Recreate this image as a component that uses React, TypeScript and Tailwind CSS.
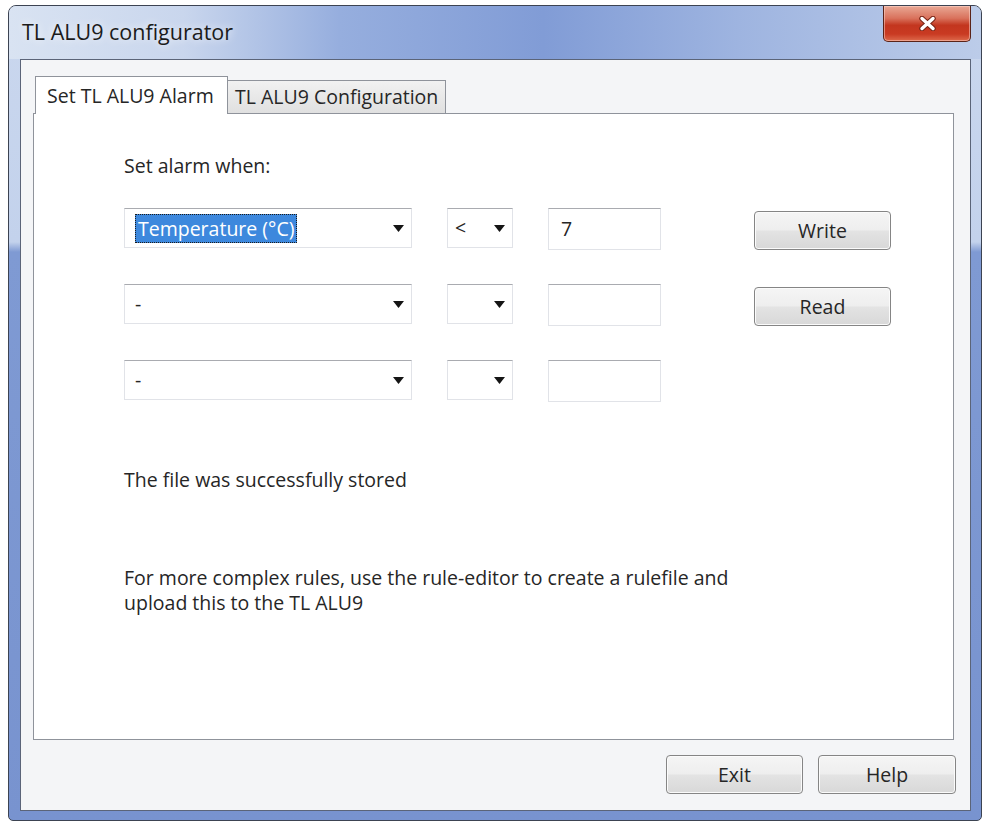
import type { ReactNode } from 'react'

function Arrow() {
  return (
    <svg width="11" height="7" viewBox="0 0 11 7" className="shrink-0">
      <path d="M0 0h11L5.5 7z" fill="#151515" />
    </svg>
  )
}

function Combo({ w, children }: { w: string; children?: ReactNode }) {
  return (
    <div
      className={`${w} h-[40px] flex items-center justify-between pl-[10px] pr-[7px] bg-white border border-[#e1e3e8] border-t-[#a9abb0]`}
    >
      <div className="flex items-center">{children}</div>
      <Arrow />
    </div>
  )
}

function Field({ value }: { value?: string }) {
  return (
    <div className="w-[113px] h-[42px] ml-[35px] flex items-center pl-[12px] bg-white border border-[#e1e3e8] border-t-[#a9abb0]">
      {value}
    </div>
  )
}

function Button({ label, className = '' }: { label: string; className?: string }) {
  return (
    <button
      className={`w-[137px] h-[39px] rounded-[4px] border border-[#858585] bg-[linear-gradient(180deg,#f5f5f5_0%,#eeeeee_48%,#e3e3e3_52%,#d8d8d8_100%)] shadow-[inset_0_0_0_1px_#fbfbfb] text-[19.5px] text-[#262626] ${className}`}
    >
      {label}
    </button>
  )
}

export default function App() {
  return (
    <div className="w-[985px] h-[823px] bg-white pt-[5px] pl-[8px] font-['Open_Sans','Noto_Sans',sans-serif]">
      {/* Window frame */}
      <div className="w-[974px] h-[816px] flex flex-col border border-[#3c4352] rounded-t-[8px] rounded-b-[5px] overflow-hidden bg-[linear-gradient(180deg,#cad7ee_0px,#c3d2ec_236px,#7f9ad3_246px,#7893cf_100%)]">
        {/* Title bar */}
        <div className="h-[53px] flex justify-between bg-[linear-gradient(90deg,#d9e3f2_0%,#c9d6ed_18%,#96aede_34%,#819cd6_55%,#9eb4e0_75%,#bccce9_100%)]">
          <div className="pl-[13px] flex items-center text-[21.5px] text-[#1b1b1b] [text-shadow:0_0_8px_#ffffff]">
            TL ALU9 configurator
          </div>
          <div className="mr-[10px] w-[88px] h-[36px] rounded-b-[5px] border border-t-0 border-[#5a2318] bg-[linear-gradient(180deg,#e9a895_0%,#d9725c_35%,#c3361f_55%,#c93a22_80%,#dd6a4c_100%)] shadow-[inset_0_0_0_1px_rgba(255,220,210,0.5)] flex items-center justify-center">
            <svg width="17" height="15" viewBox="0 0 17 15">
              <path d="M3 2.5l11 10M14 2.5l-11 10" stroke="#7a2516" strokeWidth="5.5" strokeLinecap="round" />
              <path d="M3 2.5l11 10M14 2.5l-11 10" stroke="#ffffff" strokeWidth="3.4" strokeLinecap="round" />
            </svg>
          </div>
        </div>

        {/* Client area */}
        <div className="flex-1 ml-[11px] mr-[10px] mb-[9px] border border-[#5b6478] bg-[#f4f5f7] flex flex-col">
          {/* Tabs */}
          <div className="mt-[16px] ml-[14px] flex items-end relative z-10 text-[19.5px] text-[#262626]">
            <div className="w-[193px] h-[38px] -mb-px bg-white border border-b-0 border-[#8f939b] flex items-center pl-[11px]">
              Set TL ALU9 Alarm
            </div>
            <div className="w-[218px] h-[33px] border border-l-0 border-b-0 border-[#8f939b] bg-[linear-gradient(180deg,#f1f1f1,#e0e0e0)] flex items-center pl-[7px]">
              TL ALU9 Configuration
            </div>
          </div>

          {/* Tab panel */}
          <div className="ml-[12px] mr-[16px] h-[627px] bg-white border border-[#8f939b] pl-[90px] flex flex-col text-[19.5px] text-[#262626]">
            <div className="mt-[40px] leading-[24px]">Set alarm when:</div>

            <div className="mt-[30px] flex flex-col gap-[34px]">
              <div className="flex items-start">
                <Combo w="w-[288px]">
                  <span className="bg-[#3d88dd] text-white leading-[27px] px-[2px] border border-dotted border-[#1b1b1b]">
                    Temperature (°C)
                  </span>
                </Combo>
                <div className="ml-[35px]">
                  <Combo w="w-[66px]">
                    <span className="-ml-[3px]">&lt;</span>
                  </Combo>
                </div>
                <Field value="7" />
                <Button label="Write" className="ml-[93px] mt-[3px]" />
              </div>
              <div className="flex items-start">
                <Combo w="w-[288px]">
                  <span>-</span>
                </Combo>
                <div className="ml-[35px]">
                  <Combo w="w-[66px]" />
                </div>
                <Field />
                <Button label="Read" className="ml-[93px] mt-[3px]" />
              </div>
              <div className="flex items-start">
                <Combo w="w-[288px]">
                  <span>-</span>
                </Combo>
                <div className="ml-[35px]">
                  <Combo w="w-[66px]" />
                </div>
                <Field />
              </div>
            </div>

            <div className="mt-[66px] leading-[24px]">The file was successfully stored</div>

            <div className="mt-[73px] leading-[25px]">
              For more complex rules, use the rule-editor to create a rulefile and
              <br />
              upload this to the TL ALU9
            </div>
          </div>

          {/* Bottom buttons */}
          <div className="mt-[15px] mr-[14px] flex justify-end gap-[15px]">
            <Button label="Exit" />
            <Button label="Help" className="w-[138px]" />
          </div>
        </div>
      </div>
    </div>
  )
}
